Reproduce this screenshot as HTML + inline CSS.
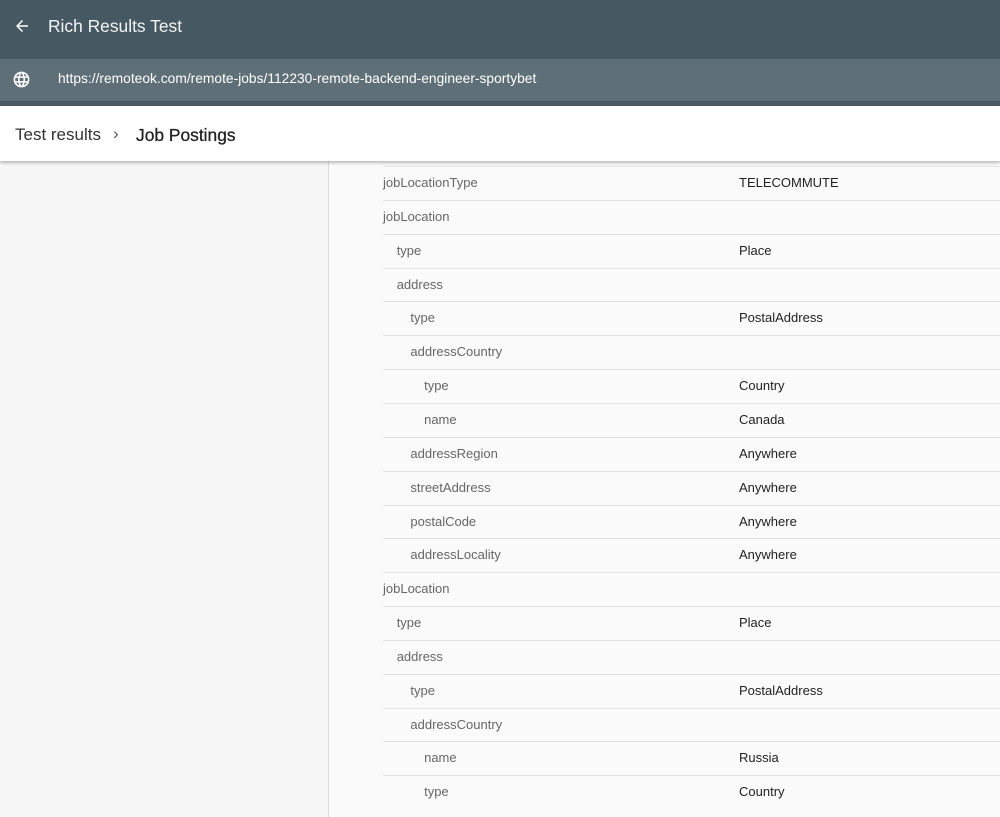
<!DOCTYPE html>
<html><head><style>
*{margin:0;padding:0;box-sizing:border-box}
body{width:1000px;height:817px;overflow:hidden;font-family:"Liberation Sans",Arial,sans-serif;background:#fafafa;position:relative}
.top{position:absolute;left:0;top:0;width:1000px;height:59px;background:#465861;color:#fff}
.top .t{position:absolute;left:48px;top:16px;font-size:17.4px;color:#f2f4f5}
.url{position:absolute;left:0;top:59px;width:1000px;background:#5e6f78;color:#fff;border-bottom:5px solid #4b5a62;height:47px}
.url .u{position:absolute;left:58px;top:12px;font-size:13.8px}
.hdr{position:absolute;left:0;top:106px;width:1000px;height:55px;background:#fff;box-shadow:0 2px 3px rgba(0,0,0,.25);z-index:2}
.hdr .b{position:absolute;left:15px;top:19px;font-size:17px;color:#333;white-space:nowrap}
.hdr .b span.c{color:#555;font-size:17px;position:absolute;left:98px;top:-1px}
.hdr .b b{font-weight:normal;color:#222;position:absolute;left:121px;top:0;font-size:17.4px;-webkit-text-stroke:0.3px #222}
.left{position:absolute;left:0;top:161px;width:329px;height:656px;background:#f6f6f6;border-right:1px solid #ddd}
.row{position:absolute;left:383px;width:617px;height:34px;border-top:1px solid #e2e2e2;font-size:13px;color:#666}
.row .k{position:absolute;top:8px}
.row .v{position:absolute;left:356px;top:8px;color:#222}
</style></head><body>
<div class="top">
<svg style="position:absolute;left:13px;top:17px" width="18" height="18" viewBox="0 0 24 24"><path d="M20 11H7.8l5.6-5.6L12 4l-8 8 8 8 1.4-1.4L7.8 13H20z" fill="#fff"/></svg>
<div class="t">Rich Results Test</div></div>
<div class="url">
<svg style="position:absolute;left:12px;top:11px" width="19" height="19" viewBox="0 0 24 24"><path fill="#fff" d="M12 2a10 10 0 100 20 10 10 0 000-20zm6.9 6h-2.9a15.6 15.6 0 00-1.4-3.6A8 8 0 0118.9 8zM12 4c.8 1.2 1.5 2.5 1.9 4h-3.8c.4-1.4 1.1-2.8 1.9-4zM4.3 14a8.2 8.2 0 010-4h3.4a16.5 16.5 0 000 4H4.3zm.8 2h3a15.6 15.6 0 001.3 3.6A8 8 0 015.1 16zm3-8h-3a8 8 0 014.3-3.6C8.8 5.5 8.4 6.7 8.1 8zM12 20c-.8-1.2-1.5-2.5-1.9-4h3.8c-.4 1.4-1.1 2.8-1.9 4zm2.3-6H9.7a14.7 14.7 0 010-4h4.6a14.7 14.7 0 010 4zm.3 5.6c.6-1.1 1.1-2.3 1.4-3.6h2.9a8 8 0 01-4.3 3.6zm1.8-5.6a16.5 16.5 0 000-4h3.4a8.2 8.2 0 010 4h-3.4z"/></svg>
<div class="u">https://remoteok.com/remote-jobs/112230-remote-backend-engineer-sportybet</div></div>
<div class="hdr"><div class="b">Test results<span class="c">›</span><b>Job Postings</b></div></div>
<div class="left"></div>
<div id="rows"></div>
<script>
var d=[["jobLocationType",0,"TELECOMMUTE"],["jobLocation",0,""],["type",1,"Place"],["address",1,""],["type",2,"PostalAddress"],["addressCountry",2,""],["type",3,"Country"],["name",3,"Canada"],["addressRegion",2,"Anywhere"],["streetAddress",2,"Anywhere"],["postalCode",2,"Anywhere"],["addressLocality",2,"Anywhere"],["jobLocation",0,""],["type",1,"Place"],["address",1,""],["type",2,"PostalAddress"],["addressCountry",2,""],["name",3,"Russia"],["type",3,"Country"]];
var h="";for(var i=0;i<d.length;i++){var y=166+i*33.85;h+='<div class="row" style="top:'+y+'px"><div class="k" style="left:'+(d[i][1]*13.7)+'px">'+d[i][0]+'</div><div class="v">'+d[i][2]+'</div></div>';}
document.getElementById("rows").innerHTML=h;
</script>
</body></html>
